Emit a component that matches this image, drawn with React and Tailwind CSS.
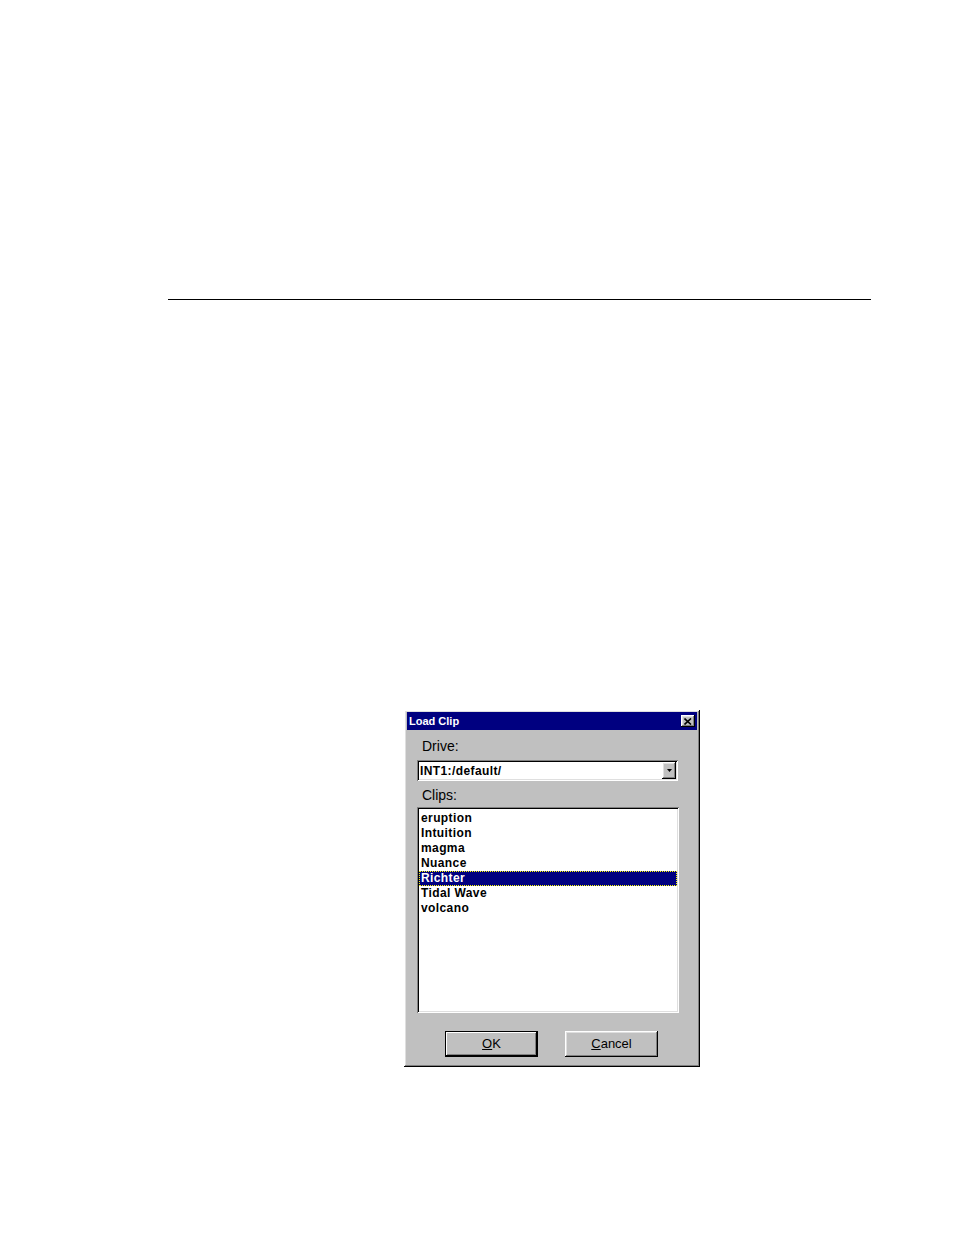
import React from 'react';

const CLIPS = ['eruption', 'Intuition', 'magma', 'Nuance', 'Richter', 'Tidal Wave', 'volcano'];

// win95 bevels
const raised = 'shadow-[inset_-1px_-1px_0_#000,inset_1px_1px_0_#fff,inset_-2px_-2px_0_#808080,inset_2px_2px_0_#dfdfdf]';
const sunken = 'shadow-[inset_1px_1px_0_#808080,inset_-1px_-1px_0_#fff,inset_2px_2px_0_#000,inset_-2px_-2px_0_#dfdfdf]';
const defaultBtn = 'shadow-[inset_0_0_0_1px_#000,inset_-2px_-2px_0_#000,inset_2px_2px_0_#fff,inset_-3px_-3px_0_#808080]';

const LoadClipDialog = () => {
  return (
    <div className={`ml-[404px] w-[296px] h-[357px] bg-[#c0c0c0] p-[2px] flex flex-col ${raised}`}>
      {/* Title bar */}
      <div className="mx-[1px] h-[18px] bg-[#000080] flex items-center justify-between pl-[2px] pr-[2px]">
        <span className="text-white text-[11px] font-bold leading-none">Load Clip</span>
        <div className={`w-[14px] h-[12px] bg-[#c0c0c0] flex items-center justify-center ${raised}`}>
          <svg width="8" height="7" viewBox="0 0 8 7">
            <path d="M0.5 0.5 L7 6.5 M7 0.5 L0.5 6.5" stroke="#000" strokeWidth="1.6" />
          </svg>
        </div>
      </div>

      <div className="pl-[16px] mt-[8px] text-[14px] leading-[16px] text-black">Drive:</div>

      {/* Drive dropdown */}
      <div className={`ml-[11px] mt-[6px] w-[261px] h-[21px] bg-white flex items-center justify-between p-[2px] ${sunken}`}>
        <span className="pl-[1px] text-[12px] font-bold tracking-[0.4px] leading-none">INT1:/default/</span>
        <div className={`w-[14px] h-[17px] bg-[#c0c0c0] flex items-center justify-center ${raised}`}>
          <svg width="5" height="3" viewBox="0 0 5 3">
            <path d="M0 0 H5 L2.5 3 Z" fill="#000" />
          </svg>
        </div>
      </div>

      <div className="pl-[16px] mt-[6px] text-[14px] leading-[16px] text-black">Clips:</div>

      {/* Clips list */}
      <div className={`ml-[11px] mt-[4px] w-[262px] h-[206px] bg-white pt-[4px] px-[1px] ${sunken}`}>
        {CLIPS.map((clip) => (
          <div
            key={clip}
            className={
              clip === 'Richter'
                ? 'h-[15px] mx-[1px] bg-[#000080] text-white border border-dotted border-[#ffff00] pl-[1px] text-[12px] font-bold tracking-[0.4px] leading-[13px]'
                : 'h-[15px] pl-[3px] text-[12px] font-bold tracking-[0.4px] leading-[15px] text-black'
            }
          >
            {clip}
          </div>
        ))}
      </div>

      {/* Buttons */}
      <div className="mt-[18px] ml-[39px] flex gap-[27px]">
        <button className={`w-[93px] h-[26px] bg-[#c0c0c0] text-[13px] text-black flex items-center justify-center ${defaultBtn}`}>
          <span><span className="underline">O</span>K</span>
        </button>
        <button className={`w-[93px] h-[26px] bg-[#c0c0c0] text-[13px] text-black flex items-center justify-center ${raised}`}>
          <span><span className="underline">C</span>ancel</span>
        </button>
      </div>
    </div>
  );
};

export default function App() {
  return (
    <div className="w-[954px] h-[1235px] bg-white pt-[299px]" style={{ fontFamily: '"Liberation Sans", Arial, sans-serif' }}>
      <div className="ml-[168px] w-[703px] h-px bg-black" />
      <div className="mt-[410px]">
        <LoadClipDialog />
      </div>
    </div>
  );
}
